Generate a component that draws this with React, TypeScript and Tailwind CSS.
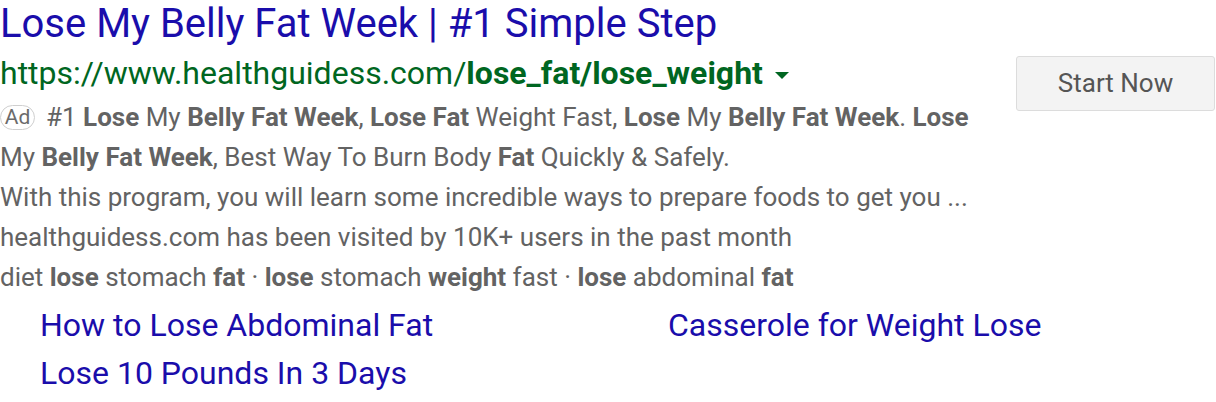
import React from "react";

const B = ({ children }: { children: React.ReactNode }) => (
  <b className="font-bold">{children}</b>
);

export default function App() {
  return (
    <div
      className="w-[1216px] h-[402px] bg-white overflow-hidden relative"
      style={{ fontFamily: "Roboto, 'Liberation Sans', sans-serif" }}
    >
      <div className="flex">
        <div className="flex-1 min-w-0">
          <div className="text-[40px] leading-[48px] text-[#1a0dab] whitespace-nowrap">
            Lose My Belly Fat Week | #1 Simple Step
          </div>
          <div className="flex items-center text-[32px] leading-[40px] text-[#006621] mt-[5px] whitespace-nowrap">
            <span>
              https://www.healthguidess.com/<b className="font-bold">lose_fat/lose_weight</b>
            </span>
            <span className="ml-[12px] mt-[4px] w-0 h-0 border-l-[7px] border-r-[7px] border-t-[7px] border-l-transparent border-r-transparent border-t-[#006621]" />
          </div>
          <div className="text-[26px] leading-[40px] text-[#636363] mt-[4px] whitespace-nowrap">
            <div className="flex items-center">
              <span className="inline-flex items-center justify-center w-[35px] h-[25px] mr-[11px] border border-[#cfcfcf] rounded-[13px] text-[21px] leading-none text-[#6b6b6b]">
                Ad
              </span>
              <span>
                #1 <B>Lose</B> My <B>Belly Fat Week</B>, <B>Lose Fat</B> Weight Fast, <B>Lose</B> My{" "}
                <B>Belly Fat Week</B>. <B>Lose</B>
              </span>
            </div>
            <div>
              My <B>Belly Fat Week</B>, Best Way To Burn Body <B>Fat</B> Quickly &amp; Safely.
            </div>
            <div>With this program, you will learn some incredible ways to prepare foods to get you ...</div>
            <div>healthguidess.com has been visited by 10K+ users in the past month</div>
            <div>
              diet <B>lose</B> stomach <B>fat</B> · <B>lose</B> stomach <B>weight</B> fast · <B>lose</B> abdominal{" "}
              <B>fat</B>
            </div>
          </div>
          <div className="grid grid-cols-[628px_max-content] pl-[40px] text-[32px] leading-[48px] text-[#1a0dab] mt-[4px] whitespace-nowrap">
            <div>How to Lose Abdominal Fat</div>
            <div>Casserole for Weight Lose</div>
            <div>Lose 10 Pounds In 3 Days</div>
          </div>
        </div>
        <div className="pt-[56px] pr-[1px] shrink-0">
          <div className="w-[199px] h-[55px] flex items-center justify-center bg-[#f3f3f3] border border-[#dcdcdc] rounded-[3px] text-[26px] text-[#555555]">
            Start Now
          </div>
        </div>
      </div>
    </div>
  );
}
